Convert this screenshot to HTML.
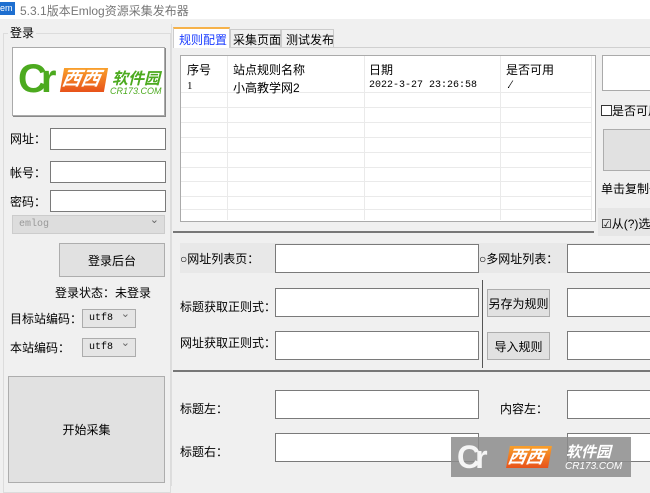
<!DOCTYPE html>
<html><head><meta charset="utf-8"><style>
*{margin:0;padding:0;box-sizing:border-box}
body{width:650px;height:486px;overflow:hidden;background:#f0f0f0;position:relative;font-family:"Liberation Sans","Noto Sans CJK SC",sans-serif;font-size:12px;color:#000}
.a{position:absolute;white-space:nowrap}
.in{position:absolute;background:#fff;border:1px solid #7a7a7a}
.btn{position:absolute;background:#e1e1e1;border:1px solid #adadad;display:flex;align-items:center;justify-content:center;font-size:12px}
.sel{position:absolute;background:#e5e5e5;border:1px solid #acacac;font-family:"Liberation Mono",monospace;font-size:10px;padding-left:6px;line-height:17px}
.sel:after{content:"⌄";position:absolute;right:5px;top:-3px;color:#666;font-size:11px}
.hl{position:absolute;height:1px;background:#eaeaea;left:181px;width:410px}
.vl{position:absolute;width:1px;background:#eaeaea;top:56px;height:164px}
</style></head><body>
<div class="a" style="left:0;top:0;width:650px;height:19px;background:#fff"></div>
<div class="a" style="left:0;top:2px;width:15px;height:13px;background:#1e6fd0;color:#fff;font-size:9px;line-height:13px">em</div>
<div class="a" style="left:20px;top:2px;color:#777;font-size:12px">5.3.1版本Emlog资源采集发布器</div>

<div class="a" style="left:3px;top:33px;width:168px;height:460px;border:1px solid #dcdcdc"></div>
<div class="a" style="left:8px;top:24px;background:#f0f0f0;padding:0 2px">登录</div>
<div class="a" style="left:12px;top:47px;width:153px;height:69px;background:#fff;border:1px solid #aaa;box-shadow:1px 1px 0 #888"></div>
<div class="a" style="left:18px;top:55px;font-size:40px;color:#4caa1f;font-weight:bold;letter-spacing:-6px;line-height:48px">Cr</div>
<div class="a" style="left:62px;top:68px;width:44px;height:24px;background:linear-gradient(#f9a02b,#e8521a);color:#fff;font-size:19px;font-weight:bold;line-height:24px;font-style:italic;transform:skewX(-10deg)">西西</div>
<div class="a" style="left:112px;top:65px;color:#4caa1f;font-size:16px;font-weight:bold;font-style:italic">软件园</div>
<div class="a" style="left:110px;top:86px;color:#4caa1f;font-size:9px;font-style:italic">CR173.COM</div>

<div class="a" style="left:10px;top:130px">网址：</div><div class="in" style="left:50px;top:128px;width:116px;height:22px"></div>
<div class="a" style="left:10px;top:164px">帐号：</div><div class="in" style="left:50px;top:161px;width:116px;height:22px"></div>
<div class="a" style="left:10px;top:193px">密码：</div><div class="in" style="left:50px;top:190px;width:116px;height:22px"></div>
<div class="sel" style="left:12px;top:215px;width:153px;height:19px;color:#999;border-color:#ccc;background:#ddd">emlog</div>
<div class="btn" style="left:59px;top:243px;width:106px;height:34px">登录后台</div>
<div class="a" style="left:55px;top:284px">登录状态：未登录</div>
<div class="a" style="left:10px;top:310px">目标站编码：</div><div class="sel" style="left:82px;top:309px;width:54px;height:19px">utf8</div>
<div class="a" style="left:10px;top:339px">本站编码：</div><div class="sel" style="left:82px;top:338px;width:54px;height:19px">utf8</div>
<div class="btn" style="left:8px;top:376px;width:157px;height:107px">开始采集</div>
<div class="a" style="left:171px;top:24px;width:1px;height:462px;background:#ddd"></div>

<div class="a" style="left:173px;top:47px;width:477px;height:1px;background:#d0d0d0"></div>
<div class="a" style="left:173px;top:27px;width:57px;height:21px;background:#fff;border:1px solid #ccc;border-bottom:none;border-top:2px solid #f6b24a;color:#1a3cff;padding:2px 0 0 5px">规则配置</div>
<div class="a" style="left:230px;top:29px;width:51px;height:18px;border:1px solid #ccc;border-bottom:none;padding:1px 0 0 2px">采集页面</div>
<div class="a" style="left:281px;top:29px;width:53px;height:18px;border:1px solid #ccc;border-bottom:none;padding:1px 0 0 4px">测试发布</div>

<div class="a" style="left:180px;top:55px;width:416px;height:167px;background:#fff;border:1px solid #aaa"></div>
<div class="hl" style="top:92px"></div><div class="hl" style="top:107px"></div><div class="hl" style="top:122px"></div><div class="hl" style="top:137px"></div><div class="hl" style="top:152px"></div><div class="hl" style="top:167px"></div><div class="hl" style="top:181px"></div><div class="hl" style="top:196px"></div><div class="hl" style="top:209px"></div>
<div class="vl" style="left:227px"></div><div class="vl" style="left:364px"></div><div class="vl" style="left:500px"></div><div class="vl" style="left:591px"></div>
<div class="a" style="left:187px;top:61px">序号</div>
<div class="a" style="left:233px;top:61px">站点规则名称</div>
<div class="a" style="left:369px;top:61px">日期</div>
<div class="a" style="left:506px;top:61px">是否可用</div>
<div class="a" style="left:187px;top:80px;font-size:11px;font-family:'Liberation Serif',serif">1</div>
<div class="a" style="left:233px;top:79px">小高教学网2</div>
<div class="a" style="left:369px;top:80px;font-size:10px;font-family:'Liberation Mono',monospace">2022-3-27 23:26:58</div>
<div class="a" style="left:507px;top:79px;font-size:11px">.⁄</div>
<div class="a" style="left:173px;top:231px;width:421px;height:2px;background:#777"></div>

<div class="in" style="left:602px;top:55px;width:50px;height:36px;border-color:#aaa"></div>
<div class="a" style="left:601px;top:102px"><span style="display:inline-block;width:11px;height:11px;border:1px solid #333;background:#fff;vertical-align:-1px"></span>是否可用</div>
<div class="btn" style="left:603px;top:129px;width:50px;height:42px"></div>
<div class="a" style="left:601px;top:180px">单击复制一</div>
<div class="a" style="left:598px;top:208px;width:52px;height:28px;background:#e6e6e6"></div>
<div class="a" style="left:601px;top:215px">☑从(?)选</div>

<div class="a" style="left:180px;top:243px;width:470px;height:30px;background:#e8e8e8"></div>
<div class="a" style="left:180px;top:250px">○网址列表页：</div>
<div class="in" style="left:275px;top:244px;width:204px;height:29px"></div>
<div class="a" style="left:479px;top:250px">○多网址列表：</div>
<div class="in" style="left:567px;top:244px;width:90px;height:29px"></div>
<div class="a" style="left:180px;top:298px">标题获取正则式：</div>
<div class="in" style="left:275px;top:288px;width:204px;height:29px"></div>
<div class="btn" style="left:487px;top:289px;width:63px;height:28px">另存为规则</div>
<div class="in" style="left:567px;top:288px;width:90px;height:29px"></div>
<div class="a" style="left:180px;top:334px">网址获取正则式：</div>
<div class="in" style="left:275px;top:331px;width:204px;height:29px"></div>
<div class="btn" style="left:487px;top:332px;width:63px;height:28px">导入规则</div>
<div class="in" style="left:567px;top:331px;width:90px;height:29px"></div>
<div class="a" style="left:482px;top:280px;width:1px;height:88px;background:#555"></div>
<div class="a" style="left:173px;top:370px;width:477px;height:2px;background:#777"></div>
<div class="a" style="left:180px;top:400px">标题左：</div>
<div class="in" style="left:275px;top:390px;width:204px;height:29px"></div>
<div class="a" style="left:500px;top:400px">内容左：</div>
<div class="in" style="left:567px;top:390px;width:90px;height:29px"></div>
<div class="a" style="left:180px;top:443px">标题右：</div>
<div class="in" style="left:275px;top:433px;width:204px;height:29px"></div>
<div class="in" style="left:567px;top:433px;width:90px;height:29px"></div>

<div class="a" style="left:451px;top:437px;width:180px;height:40px;background:rgba(140,140,140,.85)"></div>
<div class="a" style="left:457px;top:437px;font-size:32px;color:#fff;font-weight:bold;letter-spacing:-5px;line-height:40px;opacity:.9">Cr</div>
<div class="a" style="left:508px;top:446px;width:42px;height:22px;background:linear-gradient(#f9a02b,#e8521a);color:#fff;font-size:18px;font-weight:bold;line-height:22px;font-style:italic;transform:skewX(-10deg)">西西</div>
<div class="a" style="left:566px;top:441px;color:#fff;font-size:15px;font-weight:bold;font-style:italic">软件园</div>
<div class="a" style="left:565px;top:461px;color:#fff;font-size:10px;font-style:italic">CR173.COM</div>
</body></html>
